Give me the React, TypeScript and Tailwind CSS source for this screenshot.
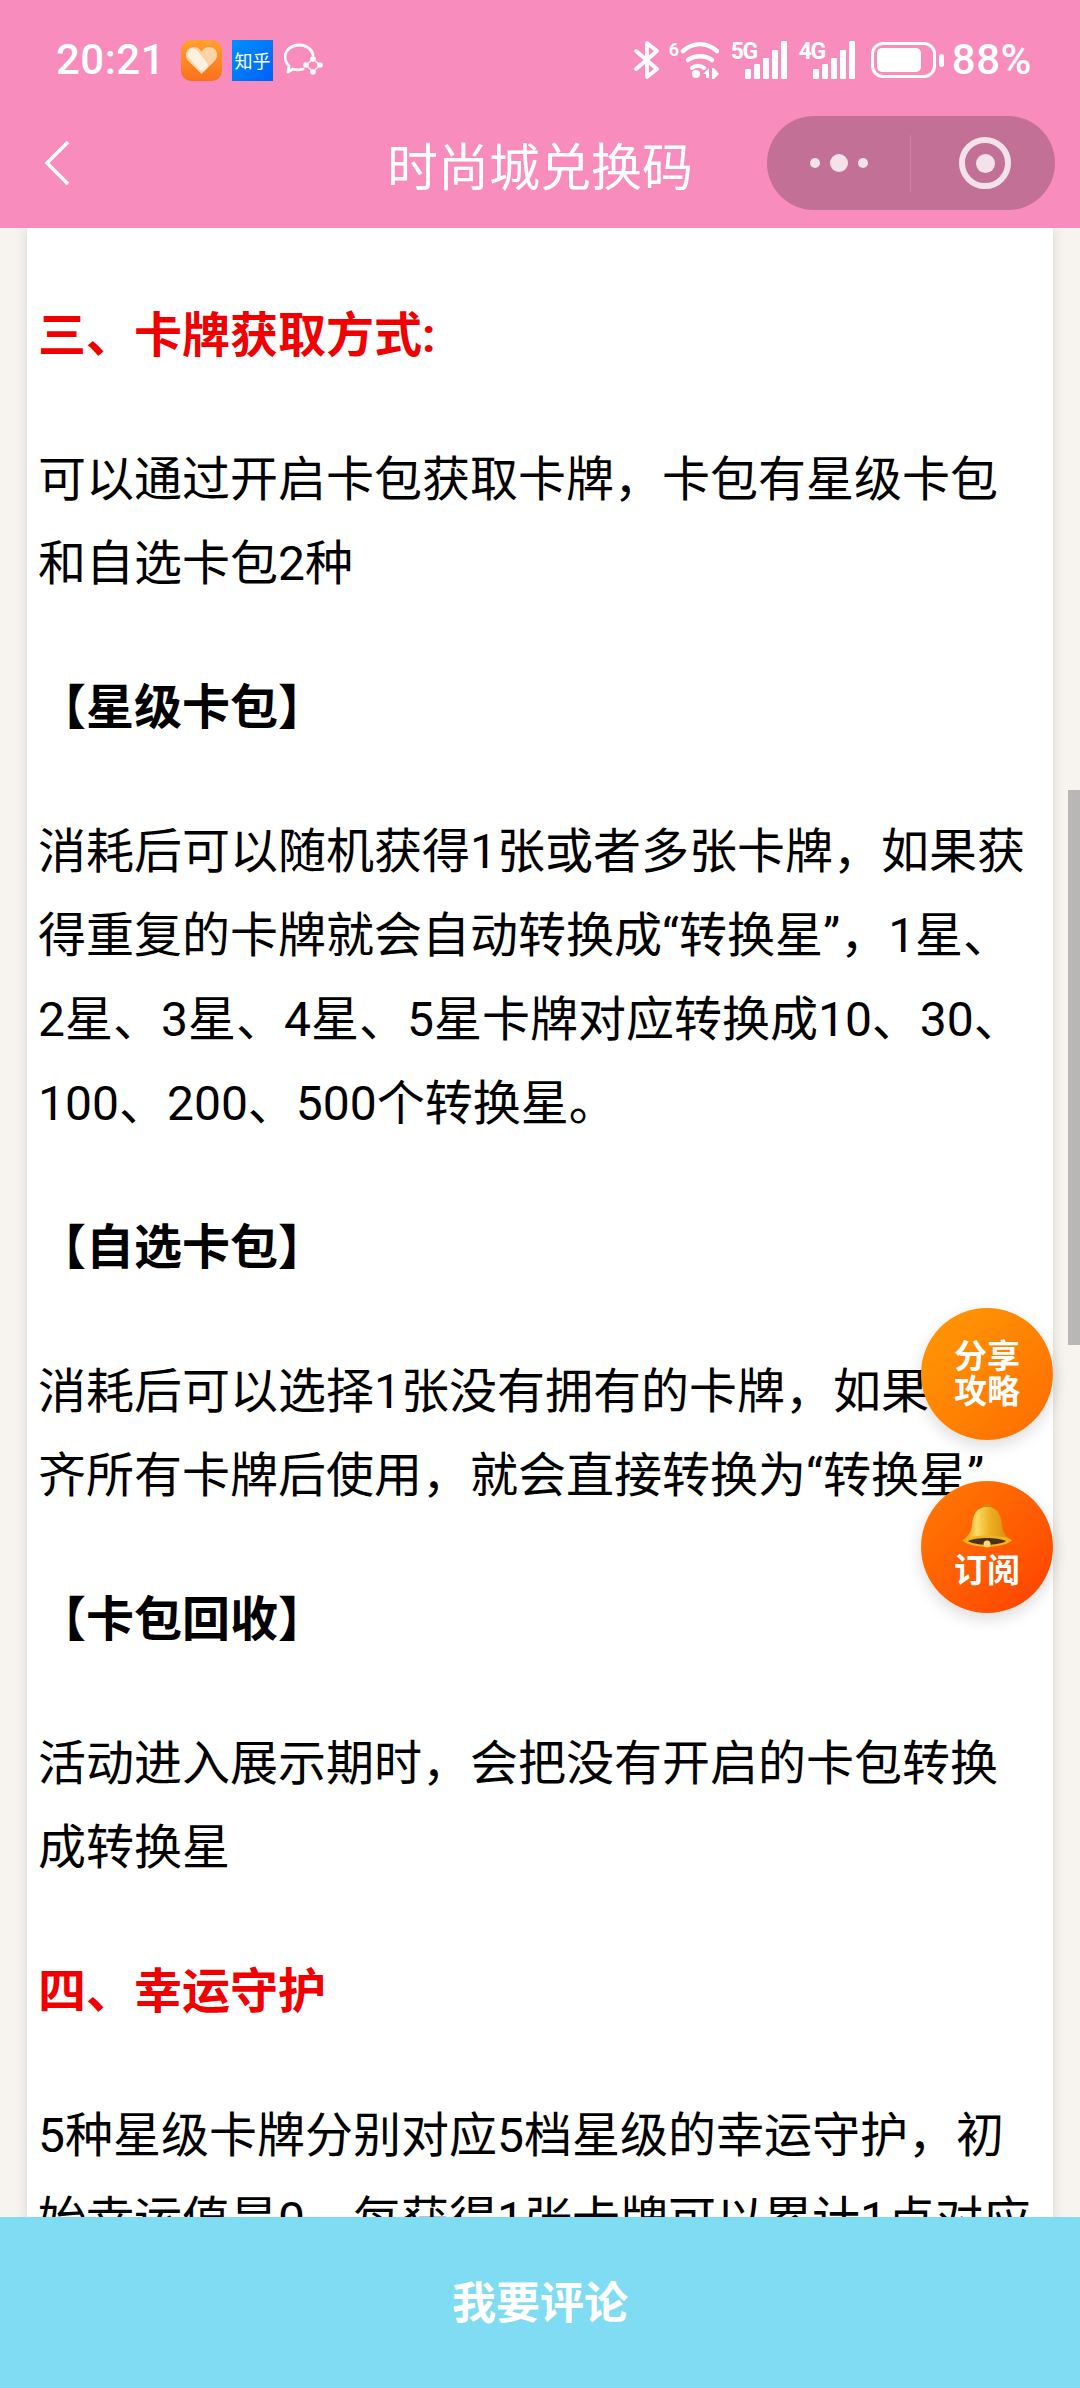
const sans = "font-['Roboto','Noto_Sans_CJK_SC',sans-serif]";

function Bell() {
  return (
    <svg width="52" height="50" viewBox="0 0 52 50">
      <defs>
        <linearGradient id="bell" x1="0" y1="0" x2="1" y2="0">
          <stop offset="0" stopColor="#d9930e" />
          <stop offset="0.3" stopColor="#fcdc62" />
          <stop offset="0.55" stopColor="#eeb024" />
          <stop offset="1" stopColor="#cf8608" />
        </linearGradient>
      </defs>
      <circle cx="26" cy="5" r="4.500" fill="#d08a10" />
      <path d="M26 4C15 4 12 12 11 22c-.6 6-3 11-10 16h50c-7-5-9.400-10-10-16C40 12 37 4 26 4z" fill="url(#bell)" />
      <path d="M1 37c6 9 44 9 50 0-10-6-40-6-50 0z" fill="#f0b41c" />
      <path d="M7 38c8 5 30 5 38 0-9-4-29-4-38 0z" fill="#4a3020" />
      <circle cx="26" cy="41" r="3.500" fill="#f6dc7a" />
    </svg>
  );
}

function Signal({ label, className }: { label: string; className: string }) {
  return (
    <div className={`relative flex h-[38px] w-[56px] items-end justify-end gap-[3px] ${className}`}>
      <span className={`${sans} absolute left-0 -top-[1px] text-[23px] font-bold leading-none tracking-[-1.500px]`}>{label}</span>
      <div className="h-[10px] w-[6px] rounded-[1px] bg-white" />
      <div className="h-[15px] w-[6px] rounded-[1px] bg-white" />
      <div className="h-[21px] w-[6px] rounded-[1px] bg-white" />
      <div className="h-[29px] w-[6px] rounded-[1px] bg-white" />
      <div className="h-[38px] w-[6px] rounded-[1px] bg-white" />
    </div>
  );
}

function StatusBar() {
  return (
    <div className="flex h-[100px] items-center justify-between pl-[56px] pr-[48px] pt-[20px] text-white">
      <div className="flex items-center">
        <span className={`${sans} text-[42px] font-medium tracking-[0.500px] leading-none`}>20:21</span>
        <div className="ml-[16px] flex h-[41px] w-[41px] items-center justify-center rounded-[10px] bg-gradient-to-b from-[#ffa02e] to-[#f9701c]">
          <svg width="33" height="29" viewBox="0 0 34 30" fill="none">
            <path d="M17 29L3 15C-2 9 2 1 9 1c4 0 6 2 8 5 2-3 4-5 8-5 7 0 11 8 6 14z" fill="#fbd3a6" />
            <path d="M8 8l10 12" stroke="#fff1e2" strokeWidth="11" strokeLinecap="round" />
          </svg>
        </div>
        <div className="ml-[10px] flex h-[41px] w-[41px] items-center justify-center bg-gradient-to-br from-[#0090ff] to-[#005ff5] font-['Noto_Sans_CJK_SC',sans-serif] text-[18px] leading-none">
          知乎
        </div>
        <svg className="ml-[11px]" width="39" height="36" viewBox="0 0 39 36" fill="none">
          <path d="M19 27c-3 1-7 1-10 0l-5 3 1-6C2 21 1 18 1 15 1 8 8 3 15 3s13 4 14 10" stroke="#fff" strokeWidth="2.800" strokeLinecap="round" strokeLinejoin="round" />
          <path d="M29 17l7 6-7 7-7-7z" stroke="#fff" strokeWidth="1.200" />
          <circle cx="29" cy="17" r="2.800" fill="#fff" />
          <circle cx="36" cy="23" r="2.800" fill="#fff" />
          <circle cx="29" cy="30" r="2.800" fill="#fff" />
          <circle cx="22" cy="23" r="2.800" fill="#fff" />
        </svg>
      </div>
      <div className="flex items-center">
        <svg width="26" height="38" viewBox="0 0 26 38" fill="none">
          <path d="M2 10l21 18-10 8V2l10 8L2 28" stroke="#fff" strokeWidth="3.800" strokeLinejoin="round" strokeLinecap="round" />
        </svg>
        <div className="relative ml-[9px] h-[38px] w-[50px]">
          <span className={`${sans} absolute left-0 top-0 text-[18px] font-bold leading-none`}>6</span>
          <svg width="50" height="38" viewBox="0 0 50 38" fill="none">
            <path d="M14 10C25 1 37 1 48 10" stroke="#fff" strokeWidth="4.500" strokeLinecap="round" />
            <path d="M19 19c7-5 17-5 24 0" stroke="#fff" strokeWidth="4.500" strokeLinecap="round" />
            <path d="M23 27c3-3 9-3 12 0" stroke="#fff" strokeWidth="4" strokeLinecap="round" />
            <circle cx="27" cy="33" r="4" fill="#fff" />
            <path d="M40 27l-6 6h3v4h3zM43 27h2l5 6-5 5h-2z" fill="#fff" />
          </svg>
        </div>
        <Signal label="5G" className="ml-[12px]" />
        <Signal label="4G" className="ml-[12px]" />
        <div className="ml-[16px] flex h-[36px] w-[65px] items-center rounded-[12px] border-[3px] border-white p-[3px]">
          <div className="h-full w-[44px] rounded-[5px] bg-white" />
        </div>
        <div className="ml-[3px] h-[13px] w-[5px] rounded-full bg-white" />
        <span className={`${sans} ml-[8px] text-[42px] font-medium tracking-[0.500px] leading-none`}>88%</span>
      </div>
    </div>
  );
}

function NavBar() {
  return (
    <div className="relative flex h-[128px] items-center justify-center">
      <svg className="absolute left-[42px] top-[39px]" width="30" height="48" viewBox="0 0 30 48" fill="none">
        <path d="M26 3L5 24l21 21" stroke="#fff" strokeWidth="3.500" />
      </svg>
      <h1 className="font-['Noto_Sans_CJK_SC',sans-serif] text-[51px] leading-none text-white">时尚城兑换码</h1>
      <div className="absolute right-[25px] top-[16px] flex h-[94px] w-[288px] items-center rounded-full bg-[#c27095]">
        <div className="flex h-[57px] w-[144px] items-center justify-center gap-[10px] border-r border-[#cf82a6]">
          <span className="h-[10px] w-[10px] rounded-full bg-[#f3e2ea]" />
          <span className="h-[18px] w-[18px] rounded-full bg-[#f3e2ea]" />
          <span className="h-[10px] w-[10px] rounded-full bg-[#f3e2ea]" />
        </div>
        <div className="flex flex-1 items-center justify-center pl-[4px]">
          <div className="flex h-[52px] w-[52px] items-center justify-center rounded-full border-[6px] border-[#f3e2ea]">
            <div className="h-[19px] w-[19px] rounded-full bg-[#f3e2ea]" />
          </div>
        </div>
      </div>
    </div>
  );
}

function P({ children }: { children: React.ReactNode }) {
  return <p className="mb-[60px]">{children}</p>;
}

function Red({ children }: { children: React.ReactNode }) {
  return <p className="mb-[60px] font-bold text-[#f00000]">{children}</p>;
}

function Sub({ children }: { children: React.ReactNode }) {
  return <p className="mb-[60px] font-bold">{children}</p>;
}

export default function App() {
  return (
    <div className="flex h-[2388px] w-[1080px] flex-col overflow-hidden bg-[#f7f4f0]">
      <header className="bg-[#f78cbd]">
        <StatusBar />
        <NavBar />
      </header>
      <main className="relative min-h-0 flex-1 overflow-hidden">
        <article className={`${sans} mx-[27px] bg-white pl-[11px] pr-[20px] pt-[66px] text-[48px] leading-[84px] text-black shadow-[0_0_12px_rgba(0,0,0,0.12)]`}>
          <Red>三、卡牌获取方式:</Red>
          <P>可以通过开启卡包获取卡牌，卡包有星级卡包和自选卡包2种</P>
          <Sub>【星级卡包】</Sub>
          <P>消耗后可以随机获得1张或者多张卡牌，如果获得重复的卡牌就会自动转换成“转换星”，1星、2星、3星、4星、5星卡牌对应转换成10、30、100、200、500个转换星。</P>
          <Sub>【自选卡包】</Sub>
          <P>消耗后可以选择1张没有拥有的卡牌，如果已集齐所有卡牌后使用，就会直接转换为“转换星”</P>
          <Sub>【卡包回收】</Sub>
          <P>活动进入展示期时，会把没有开启的卡包转换成转换星</P>
          <Red>四、幸运守护</Red>
          <P>5种星级卡牌分别对应5档星级的幸运守护，初始幸运值是0，每获得1张卡牌可以累计1点对应</P>
        </article>
        <div className="absolute right-0 top-[562px] h-[555px] w-[12px] bg-[#b9b7b5]" />
        <button className={`${sans} absolute left-[921px] top-[1080px] flex h-[132px] w-[132px] items-center justify-center rounded-full bg-gradient-to-br from-[#ff9a05] to-[#ff6a00] text-[33px] font-bold leading-[35px] text-white shadow-[0_6px_16px_rgba(0,0,0,0.14)]`}>
          分享<br />攻略
        </button>
        <button className={`${sans} absolute left-[921px] top-[1253px] flex h-[132px] w-[132px] flex-col items-center rounded-full bg-gradient-to-br from-[#ff7a05] to-[#ff3c00] pt-[22px] text-[33px] font-bold leading-[35px] text-white shadow-[0_6px_16px_rgba(0,0,0,0.14)]`}>
          <Bell />
          <span>订阅</span>
        </button>
      </main>
      <footer className="flex h-[171px] items-center justify-center bg-[#80dcf2] pb-[6px] font-['Noto_Sans_CJK_SC',sans-serif] text-[44px] font-bold text-white">
        我要评论
      </footer>
    </div>
  );
}
